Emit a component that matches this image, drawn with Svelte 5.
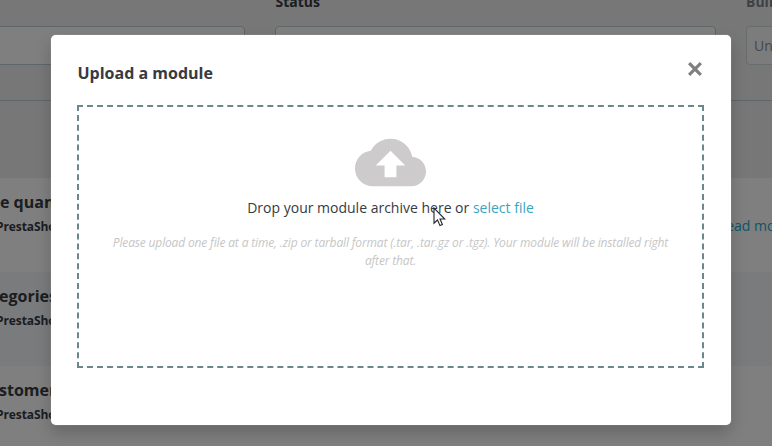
<script>
  const modules = [
    { name: 'e quantities', author: 'PrestaShop', more: true, shift: 0 },
    { name: 'egories block', author: 'PrestaShop', more: false, shift: -1 },
    { name: 'stomer data', author: 'PrestaShop', more: false, shift: -1 },
  ];
</script>

<div class="screen">
  <main>
    <section class="filters">
      <div class="field category"><b>&nbsp;</b><div class="input"></div></div>
      <div class="field status"><b>Status</b><div class="input"></div></div>
      <div class="field bulk"><b>Bulk actions</b><div class="input">Uninstall</div></div>
    </section>
    <div class="band"></div>
    {#each modules as m}
      <article>
        <div class="info">
          <h3 style="margin-left: {m.shift}px">{m.name}</h3>
          <p>{m.author}</p>
        </div>
        {#if m.more}<span class="more">Read more</span>{/if}
      </article>
    {/each}
  </main>

  <div class="backdrop">
    <div class="modal" role="dialog" aria-label="Upload a module">
      <header>
        <h2>Upload a module</h2>
        <button aria-label="Close">
          <svg width="14" height="14" viewBox="0 0 14 14"><path d="M2.2 2.2 11.8 11.8M11.8 2.2 2.2 11.8" stroke="#7f7f7f" stroke-width="3.1" stroke-linecap="square" stroke-linejoin="round" /></svg>
        </button>
      </header>
      <div class="drop">
        <svg class="frame" width="627" height="263" viewBox="0 0 627 263" fill="none" stroke="#6c868e" stroke-width="2">
          <path d="M0 1H627M0 262H627" stroke-dasharray="6 4.017" />
          <path d="M1 0V263M626 0V263" stroke-dasharray="6 3.885" />
        </svg>
        <svg class="cloud" width="71" height="71" viewBox="0 0 24 24"><path fill="#cdcbcc" d="M19.35 10.04C18.67 6.59 15.64 4 12 4 9.11 4 6.6 5.64 5.35 8.04 2.34 8.36 0 10.91 0 14c0 3.31 2.69 6 6 6h13c2.76 0 5-2.24 5-5 0-2.64-2.05-4.78-4.65-4.96zM14 13v4h-4v-4H7l5-5 5 5h-3z" /></svg>
        <p class="prompt">Drop your module archive here or <span>select file</span></p>
        <p class="hint">Please upload one file at a time, .zip or tarball format (.tar, .tar.gz or .tgz). Your module will be installed right after that.</p>
      </div>
    </div>
  </div>

  <svg class="cursor" width="13" height="20" viewBox="0 0 13 20"><path d="M1 1V16.2L4.5 13 7 18.6 9.4 17.5 7 12H11.8Z" fill="#fff" stroke="#25232d" stroke-width="1.1" /></svg>
</div>

<style>
  :global(body) { margin: 0; }
  .screen {
    position: relative;
    width: 772px;
    height: 446px;
    overflow: hidden;
    font-family: "Open Sans", "Noto Sans", sans-serif;
    color: #363a41;
  }
  h2, h3, p { margin: 0; }
  main { width: 772px; background: #fff; }
  .filters {
    display: flex;
    height: 100px;
    background: #eee;
    border-bottom: 1px solid #bbcdd2;
  }
  .field { flex: none; font-size: 14px; }
  .field b { display: block; height: 20px; margin-top: -8px; line-height: 20px; margin-bottom: 14px; }
  .input {
    box-sizing: border-box;
    height: 39px;
    padding-left: 7px;
    line-height: 37px;
    background: #fff;
    border: 1px solid #bbcdd2;
    border-radius: 4px;
  }
  .category { width: 275px; }
  .category .input { width: 255px; margin-left: -10px; }
  .status { width: 471px; }
  .status b { padding-left: 0.5px; }
  .status .input { width: 441px; }
  .bulk { width: 120px; opacity: 0.6; }
  .bulk .input { color: #4e5054; }
  .band { height: 77px; background: #eee; }
  article { display: flex; justify-content: space-between; height: 94px; }
  article:nth-of-type(even) { background: #f5f7fa; }
  article:last-child { height: 100px; }
  .info { padding-top: 13px; }
  h3 { font-size: 16px; line-height: 22px; }
  .info p { margin: 5px 0 0 -4px; font-size: 12px; line-height: 17px; font-weight: 700; letter-spacing: -0.1px; }
  .more { margin: 37px -17px 0 0; font-size: 14px; line-height: 22px; color: #25a9c7; }
  .backdrop {
    position: absolute;
    inset: 0;
    background: rgba(0, 0, 0, 0.5);
  }
  .modal {
    box-sizing: border-box;
    width: 680px;
    height: 390px;
    margin: 35px 0 0 51px;
    padding: 26px 27px 0 26px;
    background: #fff;
    border-radius: 5px;
    box-shadow: 0 8px 16px rgba(0, 0, 0, 0.2), 0 0 1px rgba(255, 255, 255, 0.8);
  }
  header { display: flex; justify-content: space-between; height: 44px; }
  h2 { padding-left: 0.5px; font-size: 16px; line-height: 24px; }
  button { display: flex; height: 14px; margin: 1px 2.5px 0 0; padding: 0; border: 0; background: none; }
  .drop {
    position: relative;
    box-sizing: border-box;
    display: flex;
    flex-direction: column;
    align-items: center;
    height: 263px;
    padding: 21.5px 30px 0;
    text-align: center;
  }
  .frame { position: absolute; left: 0; top: 0; }
  .prompt { margin-top: -0.5px; font-size: 14px; line-height: 22px; }
  .prompt span { color: #3ba5bf; }
  .hint { margin-top: 15px; font-size: 12px; line-height: 18px; font-style: italic; letter-spacing: -0.155px; color: #c6c6c6; }
  .cursor { position: absolute; left: 432.5px; top: 207px; }
</style>
